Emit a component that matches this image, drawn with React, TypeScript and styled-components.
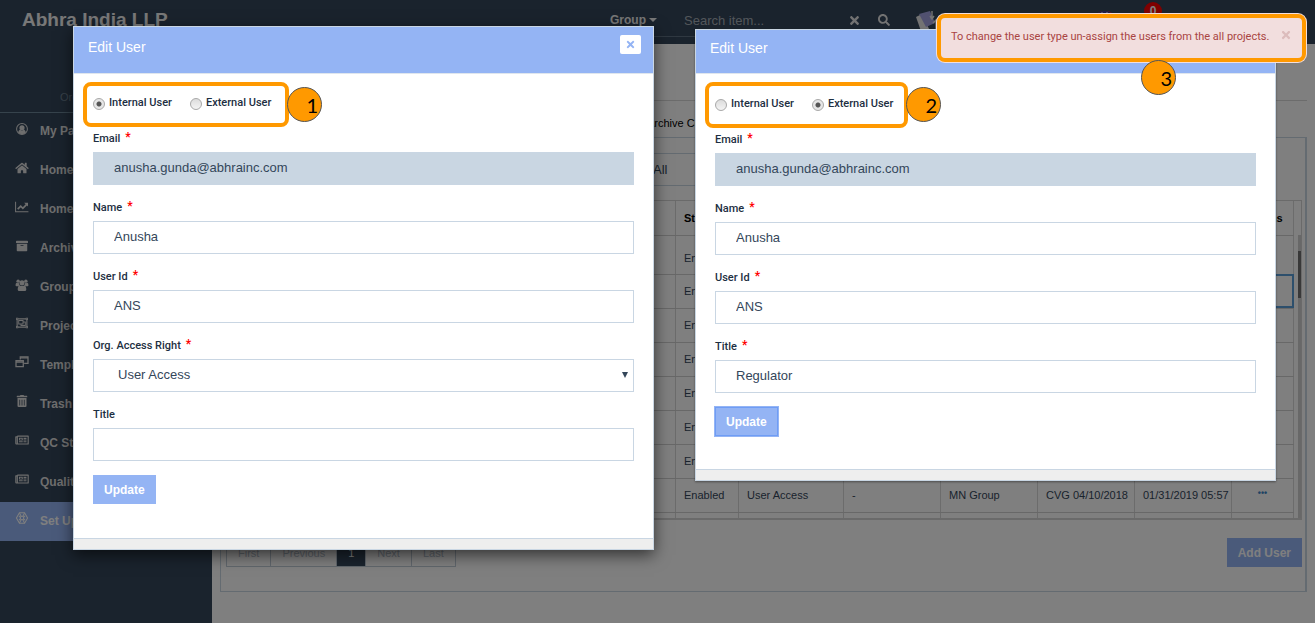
import React from 'react';
import styled, { createGlobalStyle, css } from 'styled-components';
import {
  FaArchive, FaHome, FaRegNewspaper, FaRegObjectGroup,
  FaSearch, FaTimes, FaTrashAlt,
} from 'react-icons/fa';

const sans = '"Liberation Sans", Arial, sans-serif';
const label = 'Roboto, "Liberation Sans", sans-serif';

const GlobalStyle = createGlobalStyle`
  *, *::before, *::after { box-sizing: border-box; }
  body { margin: 0; background: #fff; font-family: ${sans}; font-size: 11px; color: #34465a; }
  button, input, select { font-family: inherit; }
`;

const Page = styled.div`
  position: relative;
  display: flex;
  flex-direction: column;
  min-height: 100vh;
`;

const TopBar = styled.header`
  display: flex;
  align-items: flex-start;
  height: 44px;
  padding: 0 9px 0 22px;
  background: #34465a;
  color: #e4e4e4;
`;

const Brand = styled.h1`
  flex: 0 0 588px;
  margin: 0;
  font-size: 19px;
  line-height: 40px;
  color: #f0f0f0;
`;

const SearchBar = styled.form`
  display: flex;
  align-items: center;
  flex: 0 0 290px;
  height: 37px;
  padding-top: 4px;
  border-bottom: 1px solid #5f7183;
`;

const GroupButton = styled.button`
  display: flex;
  align-items: center;
  gap: 3px;
  width: 74px;
  padding: 0;
  border: 0;
  background: none;
  color: #f0f0f0;
  font-size: 12px;
  font-weight: bold;
`;

const Caret = styled.span`
  border: 4px solid transparent;
  border-top-color: currentColor;
  border-bottom: 0;
`;

const SearchInput = styled.input`
  width: 164px;
  padding: 0;
  border: 0;
  background: none;
  font-size: 13px;
  &::placeholder { color: #a5adb5; }
`;

const IconButton = styled.button<{ $size: number }>`
  display: flex;
  width: 30px;
  padding: 0;
  border: 0;
  background: none;
  color: #e4e4e4;
  font-size: ${(p) => p.$size}px;
`;

const BarTools = styled.div`
  display: flex;
  flex: 1;
  gap: 18px;
  align-items: flex-start;
  padding: 11px 0 0 8px;
  font-size: 12px;
`;

const Spacer = styled.span`
  flex: 1;
`;

const Account = styled.span`
  flex: 0 0 126px;
`;

const Alerts = styled.a`
  display: flex;
  justify-content: center;
  width: 18px;
  height: 18px;
  margin-top: -9px;
  border-radius: 50%;
  background: #ff0000;
  color: #fff;
  font-weight: bold;
  line-height: 18px;
  text-decoration: none;
`;

const Columns = styled.div`
  display: flex;
  flex: 1;
`;

const Sidebar = styled.nav`
  flex: 0 0 212px;
  background: #34465a;
`;

const SideTitle = styled.div`
  height: 69px;
  padding: 46px 0 0 60px;
  border-bottom: 1px solid #6c8698;
  color: #6f8192;
  line-height: 14px;
`;

const SideMenu = styled.div`
  display: flex;
  flex-direction: column;
  height: 428px;
`;

const SideLink = styled.a<{ $active?: boolean }>`
  display: flex;
  align-items: center;
  flex: 1;
  padding: 0 0 2px 15px;
  gap: 11px;
  color: ${(p) => (p.$active ? '#fff' : '#dcdcdc')};
  background: ${(p) => (p.$active ? '#94b4f4' : 'transparent')};
  font-size: 12px;
  font-weight: bold;
  text-decoration: none;
  svg { width: 14px; height: 12px; margin-bottom: 5px; }
`;

const Main = styled.main`
  display: flex;
  flex-direction: column;
  flex: 1;
  min-width: 0;
  padding: 56px 8px 30px;
`;

const Tabs = styled.nav`
  display: flex;
  align-items: center;
  height: 37px;
  padding: 8px 0 0 427px;
  border-top: 1px solid #d8d8d8;
  a { color: #000; text-decoration: none; }
`;

const Panel = styled.section`
  padding: 15px 3px 24px 5px;
  border: 1px solid #c9d6e3;
  border-right-width: 2px;
`;

const Filters = styled.div`
  display: flex;
  gap: 6px;
  margin-bottom: 14px;
`;

const field = css`
  height: 33px;
  border: 1px solid #c9d6e3;
  background: #fff;
  color: #34465a;
  font-size: 13px;
`;

const FilterInput = styled.input`
  ${field}
  flex: 0 0 400px;
`;

const FilterSelect = styled.select`
  ${field}
  flex: 0 0 240px;
  padding-left: 20px;
  appearance: none;
  border-radius: 0;
`;

const GridBox = styled.div`
  position: relative;
  height: 320px;
  padding-right: 7px;
  overflow: hidden;
  border: 1px solid #d4d4d4;
  border-bottom-width: 2px;
`;

const GridTable = styled.table`
  width: 100%;
  table-layout: fixed;
  border-collapse: collapse;
  th, td {
    height: 34px;
    padding: 0 8px;
    border-right: 1px solid #d8d8d8;
    border-bottom: 1px solid #d0d0d0;
    overflow: hidden;
    white-space: nowrap;
    text-align: left;
  }
  th { color: #000; }
  th:last-child, td:last-child { padding: 0 4px; text-align: center; }
  tbody tr:first-child td { height: 39px; padding-top: 6px; }
`;

const GridRow = styled.tr<{ $selected?: boolean }>`
  ${(p) => p.$selected && css`td:last-child { outline: 2px solid #5a9fd8; outline-offset: -2px; }`}
`;

const ScrollTrack = styled.div`
  position: absolute;
  top: 34px;
  right: 0;
  bottom: 0;
  width: 3px;
  padding-top: 16px;
  background: #d0d0d0;
  &::before { content: ''; display: block; height: 47px; background: #707070; }
`;

const RowMenu = styled.button`
  padding: 0 0 6px;
  border: 0;
  background: none;
  color: #3c85c6;
  font-size: 9px;
  font-weight: bold;
`;

const PanelFoot = styled.div`
  display: flex;
  justify-content: space-between;
  margin-top: 18px;
`;

const Pager = styled.div`
  display: flex;
  height: 29px;
  border: 1px solid #c0ccd8;
`;

const PageButton = styled.button<{ $current?: boolean }>`
  padding: 0 11px;
  border: 0;
  border-right: 1px solid #c0ccd8;
  background: ${(p) => (p.$current ? '#34465a' : 'none')};
  color: ${(p) => (p.$current ? '#fff' : '#b4c0cc')};
  font-size: 11px;
  &:last-child { border-right: 0; }
`;

const Button = styled.button<{ $focused?: boolean }>`
  height: 29px;
  padding: 0 10px;
  border: 1px solid #94b4f4;
  background: #94b4f4;
  color: #fff;
  font-size: 12px;
  font-weight: bold;
  ${(p) => p.$focused && css`border-color: #6f9df5; box-shadow: 0 0 0 1px #94b4f4;`}
`;

const Overlay = styled.div`
  position: absolute;
  inset: 0;
  display: flex;
  align-items: flex-start;
  gap: 41px;
  padding: 26px 39px 0 73px;
  background: rgba(0, 0, 0, 0.5);
`;

const Dialog = styled.section<{ $raised?: boolean }>`
  flex: 1;
  min-width: 0;
  margin-top: ${(p) => (p.$raised ? 0 : 3)}px;
  border: 1px solid #c9d6e3;
  background: #fff;
  box-shadow: ${(p) => (p.$raised ? '0 5px 15px rgba(0, 0, 0, 0.6)' : '0 1px 2px rgba(0, 0, 0, 0.4)')};
`;

const DialogHead = styled.header<{ $raised?: boolean }>`
  display: flex;
  align-items: flex-start;
  justify-content: space-between;
  height: ${(p) => (p.$raised ? 47 : 44)}px;
  padding: ${(p) => (p.$raised ? 8 : 6)}px 12px 0 14px;
  border-bottom: 1px solid #dfe6ee;
  background: #94b4f4;
  color: #fff;
  h2 { margin: 0; font-size: 14px; font-weight: normal; line-height: 24px; }
`;

const DialogClose = styled.button`
  display: flex;
  align-items: center;
  justify-content: center;
  width: 21px;
  height: 19px;
  border: 0;
  border-radius: 2px;
  background: #fff;
  color: #94b4f4;
  font-size: 11px;
`;

const DialogBody = styled.div<{ $raised?: boolean }>`
  padding: 8px 19px ${(p) => (p.$raised ? 34 : 33)}px;
`;

const DialogFoot = styled.footer`
  height: 11px;
  border-top: 1px solid #c9d6e3;
  background: #eee;
`;

const TypePicker = styled.fieldset<{ $raised?: boolean }>`
  position: relative;
  display: flex;
  gap: 18px;
  width: ${(p) => (p.$raised ? 206 : 203)}px;
  height: ${(p) => (p.$raised ? 45 : 46)}px;
  margin: 0 0 4px -10px;
  padding: ${(p) => (p.$raised ? 9 : 10)}px 6px 0;
  border: 4px solid #ff9900;
  border-radius: 8px;
`;

const RadioLabel = styled.label`
  display: flex;
  gap: 4px;
  height: 16px;
  font-family: ${label};
  font-size: 11px;
  font-weight: 500;
  line-height: 16px;
  white-space: nowrap;
  color: #1d2f42;
`;

const Radio = styled.input`
  appearance: none;
  width: 12px;
  height: 12px;
  margin: 3px 0 0;
  border: 1px solid #a8a8a8;
  border-radius: 50%;
  background: linear-gradient(#dcdcdc, #f4f4f4);
  &:checked { background: radial-gradient(circle, #555 0 2px, #e6e6e6 3px); }
`;

const Step = styled.span`
  position: absolute;
  top: 1px;
  left: 100%;
  width: 35px;
  height: 35px;
  margin-left: 2px;
  padding-right: 3px;
  border: 1px solid #555;
  border-radius: 50%;
  background: #ff9900;
  color: #000;
  font-family: Lato, sans-serif;
  font-size: 20px;
  line-height: 34px;
  text-align: right;
`;

const ToastStep = styled(Step)`
  top: 42px;
  left: 198px;
`;

const Field = styled.div`
  margin-bottom: 15px;
  &:last-of-type { margin-bottom: 14px; }
`;

const FieldLabel = styled.label`
  display: flex;
  gap: 5px;
  height: 16px;
  margin-bottom: 5px;
  font-family: ${label};
  font-size: 11px;
  font-weight: 500;
  line-height: 16px;
  color: #1d2f42;
`;

const Required = styled.span`
  margin-top: -2px;
  color: #ff0000;
  font-size: 12px;
  font-weight: bold;
`;

const TextInput = styled.input`
  ${field}
  display: block;
  width: 100%;
  padding: 0 20px 2px;
  &:disabled { background: #c9d6e2; }
`;

const SelectWrap = styled.div`
  position: relative;
  &::after {
    content: '';
    position: absolute;
    top: 13px;
    right: 6px;
    border: 3px solid transparent;
    border-top: 6px solid #34465a;
    border-bottom: 0;
    pointer-events: none;
  }
`;

const Select = styled.select`
  ${field}
  display: block;
  width: 100%;
  padding: 0 24px 2px;
  border-radius: 0;
  appearance: none;
`;

const Toast = styled.div`
  position: absolute;
  top: 14px;
  right: 9px;
  display: flex;
  align-items: flex-start;
  justify-content: space-between;
  width: 369px;
  height: 48px;
  padding: 11px 10px 0;
  border: 4px solid #ff9900;
  border-radius: 8px;
  background: #f2dede;
  box-shadow: 0 0 0 1px #f2dede;
  color: #a94442;
  font-family: ${label};
  font-size: 11px;
  line-height: 15px;
`;

const ToastClose = styled.button`
  padding: 0;
  border: 0;
  background: none;
  color: #dcbcbc;
  font-size: 12px;
`;

function UserIcon() {
  return (
    <svg viewBox="0 0 28 28" fill="currentColor">
      <circle cx="14" cy="14" r="12.6" fill="none" stroke="currentColor" strokeWidth="2.4" />
      <circle cx="14" cy="11" r="6" />
      <path d="M5 22c1-5 4-6 5-6 2 2 6 2 8 0 1 0 4 1 5 6-5 5-13 5-18 0z" />
    </svg>
  );
}

function ChartIcon() {
  return (
    <svg viewBox="0 0 32 28" fill="none" stroke="currentColor">
      <path d="M1 2v23h30" strokeWidth="2.4" />
      <path d="M6 19l7-7 5 5 9-9" strokeWidth="4" />
      <path d="M21 4h9v9z" fill="currentColor" stroke="none" />
    </svg>
  );
}

function PeopleIcon() {
  return (
    <svg viewBox="0 0 30 28" fill="currentColor">
      <circle cx="6" cy="5" r="4" />
      <circle cx="24" cy="5" r="4" />
      <circle cx="15" cy="9" r="6" />
      <path d="M0 15c0-4 1-6 3-6 2 1 4 1 5 0 0 3 1 5 2 6-2 0-3 1-4 2H3c-2 0-3-1-3-2zM30 15c0-4-1-6-3-6-2 1-4 1-5 0 0 3-1 5-2 6 2 0 3 1 4 2h3c2 0 3-1 3-2zM5 24c0-6 2-9 5-9 3 2 7 2 10 0 3 0 5 3 5 9 0 3-1 4-4 4H9c-3 0-4-1-4-4z" />
    </svg>
  );
}

function WindowsIcon() {
  return (
    <svg viewBox="0 0 32 28" fill="none" stroke="currentColor" strokeWidth="3">
      <path d="M12 8V2h18v15h-9" />
      <path d="M2 11h17v14H2z" />
      <path d="M2 12h17v4H2zM12 3h18v3H12z" fill="currentColor" stroke="none" />
    </svg>
  );
}

function SetUpIcon() {
  return (
    <svg viewBox="0 0 28 28" fill="none" stroke="currentColor" strokeWidth="2.4">
      <path d="M8 2h12l7 12-7 12H8L1 14z" />
      <circle cx="14" cy="14" r="4" />
      <path d="M8 2l4 8M20 2l-4 8M20 26l-4-8M8 26l4-8M7 9l3 3M21 9l-3 3M7 19l3-3M21 19l-3-3" />
    </svg>
  );
}

function SyncLogo() {
  return (
    <svg width="28" height="26" viewBox="0 0 28 26">
      <path d="M0 6L6 3l8 17-8 3z" fill="#e6e6e6" />
      <path d="M3 3l11-3 5 12-9 4z" fill="#a3a3e0" />
      <path d="M16 0v8M14 5l2 3 2-3M20 19V9M17 12l3-3 3 3" stroke="#e6e6e6" strokeWidth="1.4" fill="none" />
    </svg>
  );
}

function Flag() {
  return (
    <svg width="28" height="18" viewBox="0 0 28 18">
      <path d="M0 2Q7-3 14 2T28 3V17Q21 19 14 15T0 15z" fill="#e02030" />
      <path d="M0 2Q7-3 13 2V9H0z" fill="#3b3b8c" />
      <path d="M3 2h2M8 2h2M4 5h2M9 5h2M14 6h14M14 10h14" stroke="#fff" />
    </svg>
  );
}

const menu = [
  { text: 'My Page', icon: <UserIcon /> },
  { text: 'Home', icon: <FaHome /> },
  { text: 'Home', icon: <ChartIcon /> },
  { text: 'Archive', icon: <FaArchive /> },
  { text: 'Groups', icon: <PeopleIcon /> },
  { text: 'Projects', icon: <FaRegObjectGroup /> },
  { text: 'Templates', icon: <WindowsIcon /> },
  { text: 'Trash', icon: <FaTrashAlt /> },
  { text: 'QC Status', icon: <FaRegNewspaper /> },
  { text: 'Quality', icon: <FaRegNewspaper /> },
  { text: 'Set Up', icon: <SetUpIcon />, active: true },
];

const columns = [
  { text: 'Name' },
  { text: 'Status', width: 63 },
  { text: 'Access', width: 105 },
  { text: 'Title', width: 97 },
  { text: 'Group', width: 97 },
  { text: 'Project', width: 97 },
  { text: 'Created', width: 97 },
  { text: 'Actions', width: 62 },
];

const Col = styled.col<{ $width?: number }>`
  width: ${(p) => (p.$width ? `${p.$width}px` : 'auto')};
`;

interface UserField {
  id: string;
  label: string;
  value: string;
  required?: boolean;
  disabled?: boolean;
  options?: boolean;
}

interface EditUserProps {
  name: string;
  step: number;
  external?: boolean;
  raised?: boolean;
  fields: UserField[];
}

function EditUser({ name, step, external, raised, fields }: EditUserProps) {
  return (
    <Dialog $raised={raised} role="dialog" aria-label="Edit User">
      <DialogHead $raised={raised}>
        <h2>Edit User</h2>
        {raised && <DialogClose aria-label="Close"><FaTimes /></DialogClose>}
      </DialogHead>
      <DialogBody $raised={raised}>
        <TypePicker $raised={raised}>
          <RadioLabel><Radio type="radio" name={name} defaultChecked={!external} />Internal User</RadioLabel>
          <RadioLabel><Radio type="radio" name={name} defaultChecked={external} />External User</RadioLabel>
          <Step>{step}</Step>
        </TypePicker>
        {fields.map((f) => {
          const id = `${name}-${f.id}`;
          return (
            <Field key={id}>
              <FieldLabel htmlFor={id}>{f.label}{f.required && <Required>*</Required>}</FieldLabel>
              {f.options ? (
                <SelectWrap><Select id={id}><option>{f.value}</option></Select></SelectWrap>
              ) : (
                <TextInput id={id} defaultValue={f.value} disabled={f.disabled} />
              )}
            </Field>
          );
        })}
        <Button $focused={!raised}>Update</Button>
      </DialogBody>
      <DialogFoot />
    </Dialog>
  );
}

const baseFields: UserField[] = [
  { id: 'email', label: 'Email', value: 'anusha.gunda@abhrainc.com', required: true, disabled: true },
  { id: 'name', label: 'Name', value: 'Anusha', required: true },
  { id: 'userid', label: 'User Id', value: 'ANS', required: true },
];

export default function App() {
  return (
    <Page>
      <GlobalStyle />
      <TopBar>
        <Brand>Abhra India LLP</Brand>
        <SearchBar>
          <GroupButton type="button">Group<Caret /></GroupButton>
          <SearchInput placeholder="Search item..." aria-label="Search item" />
          <IconButton type="button" $size={13} aria-label="Clear"><FaTimes /></IconButton>
          <IconButton type="button" $size={12} aria-label="Search"><FaSearch /></IconButton>
        </SearchBar>
        <BarTools>
          <SyncLogo />
          <Spacer />
          <Flag />
          <Alerts href="#alerts">0</Alerts>
          <Account>Hi Abhra India</Account>
        </BarTools>
      </TopBar>
      <Columns>
        <Sidebar>
          <SideTitle>Organization</SideTitle>
          <SideMenu>
            {menu.map((m, i) => (
              <SideLink key={i} href="#menu" $active={m.active}>{m.icon}{m.text}</SideLink>
            ))}
          </SideMenu>
        </Sidebar>
        <Main>
          <Tabs><a href="#archive">Archive Content</a></Tabs>
          <Panel>
            <Filters>
              <FilterInput aria-label="Filter users" />
              <FilterSelect aria-label="Status"><option>All</option></FilterSelect>
            </Filters>
            <GridBox>
              <GridTable>
                <colgroup>{columns.map((c) => <Col key={c.text} $width={c.width} />)}</colgroup>
                <thead><tr>{columns.map((c) => <th key={c.text}>{c.text}</th>)}</tr></thead>
                <tbody>
                  {[0, 1, 2, 3, 4, 5, 6, 7].map((n) => (
                    <GridRow key={n} $selected={n === 1}>
                      <td />
                      <td>Enabled</td>
                      <td>User Access</td>
                      <td>-</td>
                      <td>MN Group</td>
                      <td>CVG 04/10/2018</td>
                      <td>01/31/2019 05:57</td>
                      <td><RowMenu aria-label="Row actions">•••</RowMenu></td>
                    </GridRow>
                  ))}
                  <GridRow>{columns.map((c) => <td key={c.text} />)}</GridRow>
                </tbody>
              </GridTable>
              <ScrollTrack />
            </GridBox>
            <PanelFoot>
              <Pager>
                <PageButton>First</PageButton>
                <PageButton>Previous</PageButton>
                <PageButton $current>1</PageButton>
                <PageButton>Next</PageButton>
                <PageButton>Last</PageButton>
              </Pager>
              <Button>Add User</Button>
            </PanelFoot>
          </Panel>
        </Main>
      </Columns>
      <Overlay>
        <EditUser
          name="internal"
          step={1}
          raised
          fields={[
            ...baseFields,
            { id: 'access', label: 'Org. Access Right', value: 'User Access', required: true, options: true },
            { id: 'title', label: 'Title', value: '' },
          ]}
        />
        <EditUser
          name="external"
          step={2}
          external
          fields={[...baseFields, { id: 'title', label: 'Title', value: 'Regulator', required: true }]}
        />
        <Toast role="alert">
          To change the user type un-assign the users from the all projects.
          <ToastClose aria-label="Dismiss"><FaTimes /></ToastClose>
          <ToastStep>3</ToastStep>
        </Toast>
      </Overlay>
    </Page>
  );
}
